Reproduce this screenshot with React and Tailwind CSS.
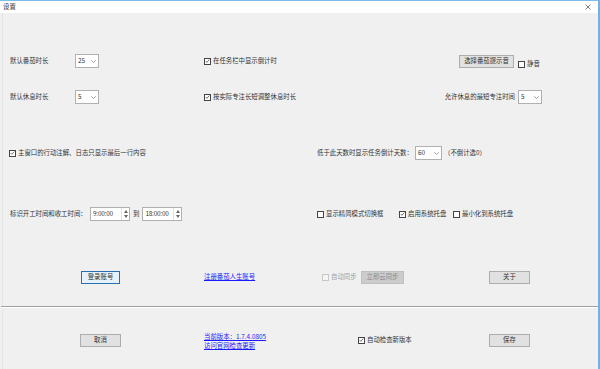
import React from 'react';

const font = { fontFamily: '"Noto Sans CJK SC", "Noto Sans", sans-serif' };

// 复选框
const Check = ({ checked, disabled, label, className = '' }) => (
  <div className={`flex items-center ${className}`}>
    <div
      className={`w-[7px] h-[7px] border flex items-center justify-center ${
        disabled ? 'border-[#c8c8c8] bg-[#f4f4f4]' : 'border-[#444] bg-white'
      }`}
    >
      {checked && (
        <svg width="6" height="6" viewBox="0 0 6 6">
          <path d="M0.8 3 L2.3 4.6 L5.2 1.2" fill="none" stroke="#333" strokeWidth="0.8" />
        </svg>
      )}
    </div>
    <span className={`ml-[2px] whitespace-nowrap ${disabled ? 'text-[#a0a0a0]' : ''}`}>{label}</span>
  </div>
);

// 下拉框
const Select = ({ value, w = 'w-[24px]' }) => (
  <div className={`${w} h-[14px] bg-white border border-[#b0b0b0] flex items-center justify-between pl-[2px] pr-[2px]`}>
    <span>{value}</span>
    <svg width="5" height="3" viewBox="0 0 5 3">
      <path d="M0.3 0.3 L2.5 2.5 L4.7 0.3" fill="none" stroke="#777" strokeWidth="0.7" />
    </svg>
  </div>
);

// 时间微调框
const Spin = ({ value }) => (
  <div className="w-[40px] h-[14px] bg-white border border-[#b0b0b0] flex items-center justify-between pl-[2px]">
    <span className="tracking-[-0.2px]">{value}</span>
    <div className="w-[8px] h-full flex flex-col items-center justify-center gap-[2px] border-l border-[#e2e2e2]">
      <svg width="4" height="3" viewBox="0 0 4 3"><path d="M0 3 L2 0 L4 3Z" fill="#666" /></svg>
      <svg width="4" height="3" viewBox="0 0 4 3"><path d="M0 0 L2 3 L4 0Z" fill="#666" /></svg>
    </div>
  </div>
);

const Btn = ({ children, w = 'w-[41px]', focus, disabled }) => (
  <div
    className={`${w} h-[13px] flex items-center justify-center border ${
      focus
        ? 'border-[#2a6fb5] bg-[#e5f1fb]'
        : disabled
        ? 'border-[#bfbfbf] bg-[#cccccc] text-[#8a8a8a]'
        : 'border-[#adadad] bg-[#e1e1e1]'
    }`}
  >
    {children}
  </div>
);

const Link = ({ children }) => (
  <span className="text-[#1a1aff] underline whitespace-nowrap">{children}</span>
);

export default function App() {
  return (
    <div
      className="w-[600px] h-[369px] bg-[#f0f0f0] text-[6.4px] leading-none text-[#333] flex flex-col overflow-hidden border-r-2 border-r-[#6eb2e6] relative"
      style={font}
    >
      {/* 标题栏 */}
      <div className="h-[13px] bg-white border-t border-t-[#7fbbe9] flex items-center justify-between pl-[3px] pr-[7px] shrink-0">
        <span className="text-[6.4px]">设置</span>
        <svg width="6" height="6" viewBox="0 0 6 6">
          <path d="M0.5 0.5 L5.5 5.5 M5.5 0.5 L0.5 5.5" stroke="#444" strokeWidth="0.7" />
        </svg>
      </div>

      <div className="flex-1 flex flex-col border-l border-l-[#e6e6e6] ml-[2px]">
        {/* 第一行 */}
        <div className="h-[14px] mt-[41px] flex items-center">
          <div className="w-[201px] pl-[7px] flex items-center">
            <span className="w-[65px]">默认番茄时长</span>
            <Select value="25" />
          </div>
          <div className="w-[255px] flex items-center">
            <Check checked label="在任务栏中显示倒计时" />
          </div>
          <Btn w="w-[55px]">选择番茄提示音</Btn>
          <Check className="ml-[4px] mt-[6px]" label="静音" />
        </div>

        {/* 第二行 */}
        <div className="h-[14px] mt-[22px] flex items-center">
          <div className="w-[201px] pl-[7px] flex items-center">
            <span className="w-[65px]">默认休息时长</span>
            <Select value="5" />
          </div>
          <div className="w-[200px] flex items-center">
            <Check checked label="按实际专注长短调整休息时长" />
          </div>
          <div className="flex-1 flex items-center justify-end pr-[56px]">
            <span className="mr-[3px]">允许休息的最短专注时间</span>
            <Select value="5" />
          </div>
        </div>

        {/* 第三行 */}
        <div className="h-[14px] mt-[42px] flex items-center">
          <div className="w-[314px] pl-[6px] flex items-center">
            <Check checked label="主窗口的行动注解、日志只显示最后一行内容" />
          </div>
          <span className="w-[98px]">低于此天数时显示任务倒计天数：</span>
          <Select value="60" w="w-[27px]" />
          <span className="ml-[2px]">（不倒计选0）</span>
        </div>

        {/* 第四行 */}
        <div className="h-[14px] mt-[47px] flex items-center">
          <div className="w-[314px] pl-[7px] flex items-center">
            <span className="w-[80px]">标识开工时间和收工时间：</span>
            <Spin value="9:00:00" />
            <span className="mx-[3px]">到</span>
            <Spin value="18:00:00" />
          </div>
          <Check className="w-[82px]" label="显示精简模式切换框" />
          <Check className="w-[54px]" checked label="启用系统托盘" />
          <Check label="最小化到系统托盘" />
        </div>

        {/* 第五行 */}
        <div className="h-[14px] mt-[49px] flex items-center">
          <div className="w-[201px] pl-[78px] flex items-center">
            <Btn w="w-[39px]" focus>登录账号</Btn>
          </div>
          <div className="w-[118px] flex items-center">
            <Link>注册番茄人生账号</Link>
          </div>
          <Check className="w-[39px]" disabled label="自动同步" />
          <Btn w="w-[43px]" disabled>立即云同步</Btn>
          <div className="ml-[85px]">
            <Btn>关于</Btn>
          </div>
        </div>

        {/* 分隔线 */}
        <div className="mt-[22px] h-[2px] border-t border-t-[#a0a0a0] border-b border-b-[#ffffff] -ml-[2px] -mr-[2px]" />

        {/* 第六行 */}
        <div className="h-[14px] mt-[25px] flex items-center">
          <div className="w-[201px] pl-[77px] flex items-center">
            <Btn>取消</Btn>
          </div>
          <div className="w-[154px] flex flex-col gap-[2px] pt-[3px]">
            <Link>当前版本：1.7.4.0805</Link>
            <Link>访问官网检查更新</Link>
          </div>
          <Check className="w-[131px]" checked label="自动检查新版本" />
          <Btn>保存</Btn>
        </div>
      </div>
    </div>
  );
}
